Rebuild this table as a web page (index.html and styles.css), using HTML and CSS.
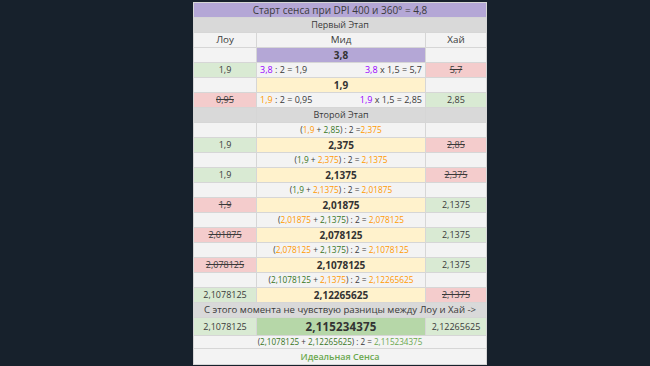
FILE: index.html
```html
<!DOCTYPE html>
<html lang="ru">
<head>
<meta charset="utf-8">
<title>Сенса</title>
<link rel="stylesheet" href="styles.css">
</head>
<body>
<table class="sheet">
  <colgroup>
    <col class="c-low">
    <col class="c-mid">
    <col class="c-high">
  </colgroup>
  <tr class="r"><td colspan="3" class="title">Старт сенса при DPI 400 и 360° = 4,8</td></tr>
  <tr class="r"><td colspan="3" class="stage">Первый Этап</td></tr>
  <tr class="r head"><td>Лоу</td><td>Мид</td><td>Хай</td></tr>
  <tr class="r"><td class="w"></td><td class="purple big">3,8</td><td class="w"></td></tr>
  <tr class="r">
    <td class="green">1,9</td>
    <td class="w split"><span><b class="pu">3,8</b> : 2 = 1,9</span><span><b class="pu">3,8</b> x 1,5 = 5,7</span></td>
    <td class="red"><s>5,7</s></td>
  </tr>
  <tr class="r"><td class="w"></td><td class="yellow big">1,9</td><td class="w"></td></tr>
  <tr class="r">
    <td class="red"><s>0,95</s></td>
    <td class="w split"><span><b class="or">1,9</b> : 2 = 0,95</span><span><b class="pu">1,9</b> x 1,5 = 2,85</span></td>
    <td class="green">2,85</td>
  </tr>
  <tr class="r"><td class="stage"></td><td class="stage">Второй Этап</td><td class="stage"></td></tr>
  <tr class="r f"><td class="w"></td><td class="w">(<b class="or">1,9</b> + <b class="gr">2,85</b>) : 2 =<b class="or">2,375</b></td><td class="w"></td></tr>
  <tr class="r"><td class="green">1,9</td><td class="yellow big">2,375</td><td class="red"><s>2,85</s></td></tr>
  <tr class="r f"><td class="w"></td><td class="w">(<b class="gr">1,9</b> + <b class="or">2,375</b>) : 2 = <b class="or">2,1375</b></td><td class="w"></td></tr>
  <tr class="r"><td class="green">1,9</td><td class="yellow big">2,1375</td><td class="red"><s>2,375</s></td></tr>
  <tr class="r f"><td class="w"></td><td class="w">(<b class="gr">1,9</b> + <b class="or">2,1375</b>) : 2 = <b class="or">2,01875</b></td><td class="w"></td></tr>
  <tr class="r"><td class="red"><s>1,9</s></td><td class="yellow big">2,01875</td><td class="green">2,1375</td></tr>
  <tr class="r f"><td class="w"></td><td class="w">(<b class="or">2,01875</b> + <b class="gr">2,1375</b>) : 2 = <b class="or">2,078125</b></td><td class="w"></td></tr>
  <tr class="r"><td class="red"><s>2,01875</s></td><td class="yellow big">2,078125</td><td class="green">2,1375</td></tr>
  <tr class="r f"><td class="w"></td><td class="w">(<b class="or">2,078125</b> + <b class="gr">2,1375</b>) : 2 = <b class="or">2,1078125</b></td><td class="w"></td></tr>
  <tr class="r"><td class="red"><s>2,078125</s></td><td class="yellow big">2,1078125</td><td class="green">2,1375</td></tr>
  <tr class="r f"><td class="w"></td><td class="w">(<b class="gr">2,1078125</b> + <b class="or">2,1375</b>) : 2 = <b class="or">2,12265625</b></td><td class="w"></td></tr>
  <tr class="r"><td class="green">2,1078125</td><td class="yellow big">2,12265625</td><td class="red"><s>2,1375</s></td></tr>
  <tr class="r"><td colspan="3" class="stage note">С этого момента не чувствую разницы между Лоу и Хай -&gt;</td></tr>
  <tr class="r-big"><td class="green">2,1078125</td><td class="green2 huge">2,115234375</td><td class="green">2,12265625</td></tr>
  <tr class="r-small"><td colspan="3" class="w small">(<b class="gr">2,1078125</b> + <b class="gr">2,12265625</b>) : 2 = <b class="lg">2,115234375</b></td></tr>
  <tr class="r-end"><td colspan="3" class="w ideal">Идеальная Сенса</td></tr>
</table>
</body>
</html>
```

FILE: styles.css
```css
html, body {
  margin: 0;
  padding: 0;
  background: #17212c;
}
body {
  padding: 2px 0 0 193px;
  font-family: "Open Sans", "Liberation Sans", sans-serif;
  color: #3a3a3a;
}
.sheet {
  border-collapse: collapse;
  table-layout: fixed;
  width: 293px;
  font-size: 9px;
}
.c-low { width: 63px; }
.c-mid { width: 169px; }
.c-high { width: 61px; }
.sheet td {
  border: 1px solid #d6d6d6;
  padding: 0 3px;
  text-align: center;
  white-space: nowrap;
  overflow: hidden;
  line-height: 12px;
  background: #f3f3f3;
}
.r { height: 15px; }
.r-big { height: 18px; }
.r-small { height: 12px; }
.r-end { height: 16px; }
.title { background: #b4a7d6 !important; font-size: 10px; }
.stage { background: #d9d9d9 !important; }
.note { font-size: 9.6px; }
.head td { background: #f3f3f3; font-size: 9.8px; }
.w { background: #f3f3f3; }
.purple { background: #b4a7d6 !important; }
.yellow { background: #fff2cc !important; }
.green { background: #d9ead3 !important; }
.green2 { background: #b6d7a8 !important; }
.red { background: #f4cccc !important; }
.big { font-weight: 700; font-size: 10px; color: #333; }
.huge { font-weight: 700; font-size: 11.5px; color: #333; letter-spacing: 0.2px; }
.sheet td.small { font-size: 8.1px; }
.sheet td.split {
  text-align: left;
}
.split span:first-child { float: left; }
.split span:last-child { float: right; }
s { text-decoration: line-through; }
b { font-weight: 400; }
.pu { color: #9900ff; }
.or { color: #ff9900; }
.gr { color: #38761d; }
.lg { color: #6aa84f; }
.ideal { color: #6aa84f; font-weight: 600; font-size: 9px; }
.f td { font-size: 8.3px; }
```
